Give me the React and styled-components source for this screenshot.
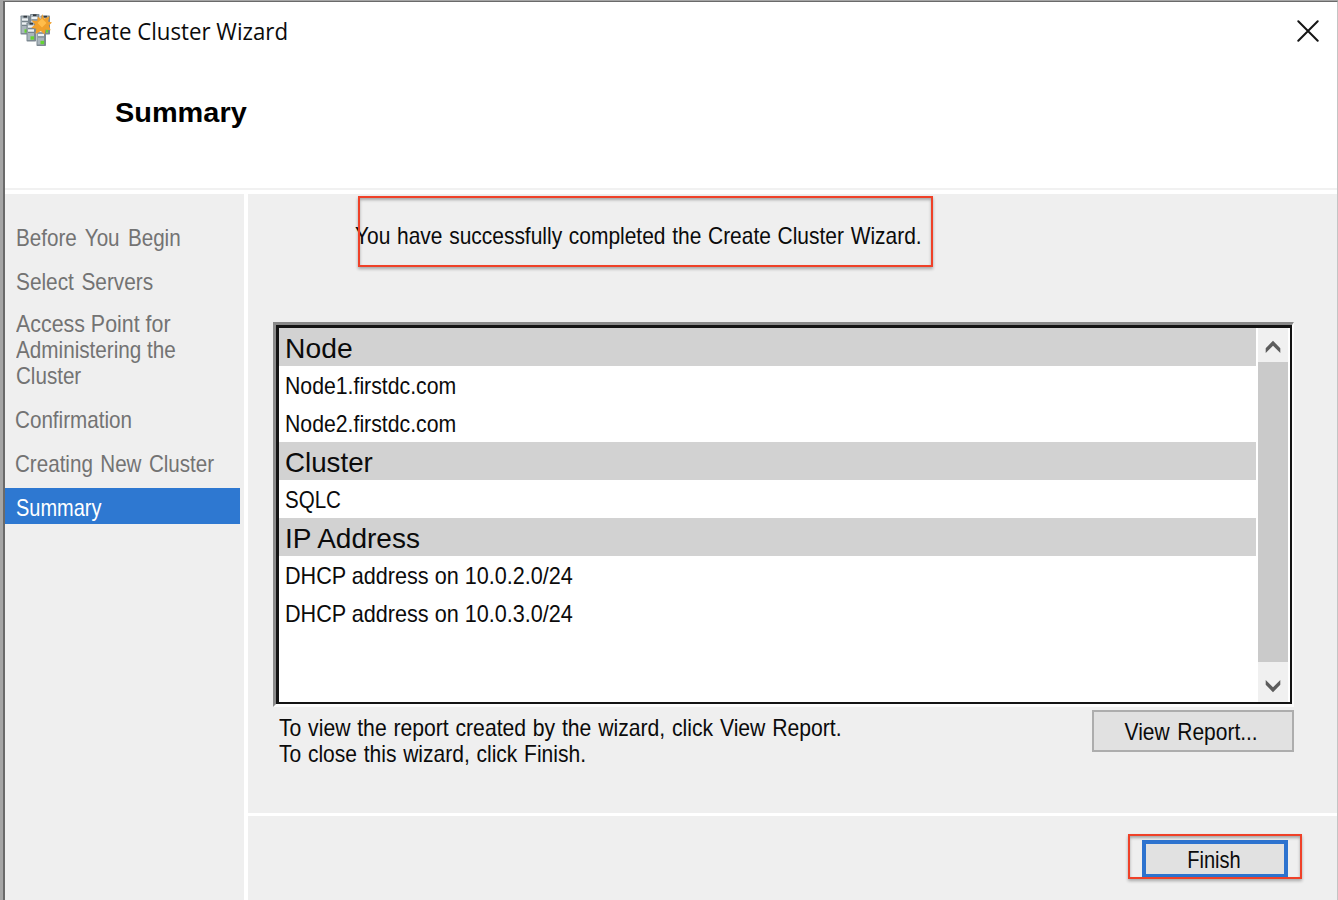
import React from "react";
import styled, { createGlobalStyle } from "styled-components";

const GlobalStyle = createGlobalStyle`
  * { box-sizing: border-box; }
  body { margin: 0; background: #a9a9a9; overflow: hidden; }
`;

const Desktop = styled.div`
  width: 1338px;
  height: 900px;
  padding: 1px 0 0 3px;
  background: #a5a5a5;
  font-family: "Liberation Sans", Arial, sans-serif;
  font-size: 24px;
  line-height: 26px;
  color: #0b0b0b;
`;

const Window = styled.div`
  display: flex;
  flex-direction: column;
  height: 899px;
  border: solid #6a6a6a;
  border-width: 1px 0 0 2px;
  border-right: 1px solid #c4c4c4;
  background: #fff;
`;

const TitleBar = styled.header`
  display: flex;
  align-items: center;
  height: 60px;
  padding: 0 18px 3px 14px;
`;

const Title = styled.div`
  flex: 1;
  padding: 1px 0 0 11px;
  font-family: "Open Sans", sans-serif;
  line-height: 34px;
`;

const Fit = styled.span`
  display: inline-block;
  white-space: nowrap;
  word-spacing: ${(p) => p.$gap || 0}px;
  transform: scaleX(${(p) => p.$x || 0.885});
  transform-origin: ${(p) => p.$from || "left"} center;
`;

const Heading = styled.h1`
  margin: 0;
  height: 126px;
  padding: 34px 0 0 110px;
  font-size: 28px;
  line-height: 34px;
  font-weight: 700;
  color: #000;
`;

const Rule = styled.div`
  height: 2px;
  margin-bottom: 4px;
  background: #f1f1f1;
`;

const Body = styled.div`
  flex: 1;
  display: flex;
  gap: 4px;
`;

const Sidebar = styled.nav`
  display: flex;
  flex-direction: column;
  gap: 8px;
  width: 239px;
  padding: 24px 4px 0 0;
  background: #efefef;
`;

const Step = styled.div`
  padding: 7px 0 3px ${(p) => p.$inset || 11}px;
  margin-top: ${(p) => p.$lift || 0}px;
  color: ${(p) => (p.$active ? "#fff" : "#737373")};
  background: ${(p) => (p.$active ? "#2e78d1" : "transparent")};
`;

const Main = styled.main`
  flex: 1;
  display: flex;
  flex-direction: column;
`;

const Page = styled.section`
  height: 619px;
  padding: 29px 43px 0 25px;
  background: #efefef;
`;

const Message = styled.div`
  position: relative;
  height: 99px;
  padding-left: 82px;
`;

const Highlight = styled.div`
  position: absolute;
  left: ${(p) => p.$left}px;
  top: ${(p) => p.$top}px;
  width: ${(p) => p.$w}px;
  height: ${(p) => p.$h}px;
  border: 2px solid #ef4128;
  box-shadow: 0 2px 3px rgba(0, 0, 0, 0.3), inset 0 2px 3px rgba(0, 0, 0, 0.3);
  pointer-events: none;
`;

const ReportFrame = styled.div`
  width: 1021px;
  height: 385px;
  border: solid;
  border-width: 3px 2px 3px 3px;
  border-color: #888 #fbfbfb #fbfbfb #8a8a8a;
`;

const Report = styled.div`
  display: flex;
  height: 379px;
  border: solid #131313;
  border-width: 3px 2px 2px 3px;
  background: #fff;
`;

const Rows = styled.div`
  flex: 1;
  margin-right: 2px;
`;

const GroupRow = styled.div`
  height: 38px;
  padding: 4px 0 0 6px;
  font-size: 28px;
  line-height: 34px;
  background: #d2d2d2;
`;

const ItemRow = styled.div`
  height: 38px;
  padding: 7px 0 0 6px;
`;

const ScrollBar = styled.div`
  display: flex;
  flex-direction: column;
  width: 30px;
  margin-right: 2px;
  background: #f0f0f0;
`;

const Arrow = styled.div`
  display: flex;
  align-items: center;
  justify-content: center;
  height: ${(p) => p.$h}px;
  padding-top: ${(p) => p.$drop}px;
`;

const Thumb = styled.div`
  height: 300px;
  background: #cacaca;
`;

const ReportFooter = styled.div`
  display: flex;
  justify-content: space-between;
  padding: 3px 0 0 6px;
`;

const Hint = styled.div`
  padding-top: 5px;
`;

const Button = styled.button`
  display: flex;
  align-items: center;
  justify-content: center;
  width: ${(p) => p.$w}px;
  height: ${(p) => p.$h}px;
  padding: 2px ${(p) => (p.$primary ? 1 : 4)}px 0 0;
  border: ${(p) => (p.$primary ? "4px solid #2d73cf" : "2px solid #adadad")};
  background: #e1e1e1;
  font: inherit;
  color: inherit;
`;

const Actions = styled.footer`
  position: relative;
  flex: 1;
  display: flex;
  justify-content: flex-end;
  align-items: flex-start;
  margin-top: 3px;
  padding: 24px 49px 0 0;
  background: #efefef;
`;

const Server = ({ x, y }) => (
  <g transform={`translate(${x} ${y})`}>
    <rect width="9.5" height="19" rx="0.8" fill="#7d8992" />
    <rect x="1" y="1" width="6.5" height="16.5" fill="#aab5bc" />
    <path d="M1.5 4h6M1.5 8h6" stroke="#eef2f3" strokeWidth="2" />
    <path d="M1.5 6h6M1.5 10h6" stroke="#77838b" strokeWidth="1.2" />
    <path d="M3 1.2h3.5" stroke="#343b40" strokeWidth="1.8" />
    <rect x="4" y="13.8" width="3.6" height="3.4" fill="#65d532" />
  </g>
);

const ClusterIcon = () => (
  <svg width="33" height="34" viewBox="0 0 33 34">
    <Server x={1.5} y={1.5} />
    <Server x={21.5} y={1.5} />
    <Server x={11} y={0} />
    <Server x={7.5} y={8.5} />
    <Server x={17.5} y={13} />
    <path
      d="M23.2 0l2 4.8 5.4-2.6-1.6 5.4 4 .8-3.3 3 2 4.9-5-.7-1.2 4.9-3.6-3.4-5.4 3 .8-5.4-5.1-1 4-3.2-3.8-3.9 5.8.4.7-4.6 3.2 2.8z"
      fill="#f0a02c"
    />
    <path d="M23 4.5l4.5 4.5-4.5 4.5-4.5-4.5z" fill="#ffbd4b" />
  </svg>
);

const CloseIcon = () => (
  <svg width="22" height="22" viewBox="0 0 22 22">
    <path d="M1.3 1.3l19.4 19.4M20.7 1.3L1.3 20.7" stroke="#151515" strokeWidth="2" strokeLinecap="round" />
  </svg>
);

const Chevron = ({ down }) => (
  <svg width="16" height="14" viewBox="0 0 16 14">
    <path
      d={down ? "M.7 1v4.8L8 13.2l7.3-7.4V1L8 8.2z" : "M.7 13V8.2L8 .8l7.3 7.4V13L8 5.8z"}
      fill="#5c5c5c"
    />
  </svg>
);

const report = [
  { title: "Node", x: 1.01, items: [["Node1.firstdc.com", 0.885], ["Node2.firstdc.com", 0.885]] },
  { title: "Cluster", x: 0.99, items: [["SQLC", 0.855]] },
  { title: "IP Address", x: 1.0, items: [["DHCP address on 10.0.2.0/24", 0.9], ["DHCP address on 10.0.3.0/24", 0.9]] },
];

export default function App() {
  return (
    <Desktop>
      <GlobalStyle />
      <Window>
        <TitleBar>
          <ClusterIcon />
          <Title><Fit $x={0.927}>Create Cluster Wizard</Fit></Title>
          <CloseIcon />
        </TitleBar>
        <Heading><Fit $x={1.032}>Summary</Fit></Heading>
        <Rule />
        <Body>
          <Sidebar>
            <Step><Fit $gap={3} $x={0.86}>Before You Begin</Fit></Step>
            <Step><Fit $gap={2} $x={0.868}>Select Servers</Fit></Step>
            <Step $lift={-2}>
              <Fit $x={0.891}>Access Point for</Fit><br />
              <Fit $x={0.862}>Administering the</Fit><br />
              <Fit $x={0.858}>Cluster</Fit>
            </Step>
            <Step $inset={10}><Fit $x={0.86}>Confirmation</Fit></Step>
            <Step $inset={10}><Fit $gap={2} $x={0.858}>Creating New Cluster</Fit></Step>
            <Step $active $inset={11}><Fit $x={0.832}>Summary</Fit></Step>
          </Sidebar>
          <Main>
            <Page>
              <Message>
                <Fit $gap={1} $x={0.873}>You have successfully completed the Create Cluster Wizard.</Fit>
                <Highlight $left={85} $top={-27} $w={575} $h={71} />
              </Message>
              <ReportFrame>
                <Report>
                  <Rows>
                    {report.map((group) => (
                      <React.Fragment key={group.title}>
                        <GroupRow><Fit $x={group.x}>{group.title}</Fit></GroupRow>
                        {group.items.map(([text, x]) => (
                          <ItemRow key={text}><Fit $x={x}>{text}</Fit></ItemRow>
                        ))}
                      </React.Fragment>
                    ))}
                  </Rows>
                  <ScrollBar>
                    <Arrow $h={34} $drop={3}><Chevron /></Arrow>
                    <Thumb />
                    <Arrow $h={40} $drop={7}><Chevron down /></Arrow>
                  </ScrollBar>
                </Report>
              </ReportFrame>
              <ReportFooter>
                <Hint>
                  <Fit $gap={1} $x={0.882}>To view the report created by the wizard, click View Report.</Fit><br />
                  <Fit $gap={1} $x={0.876}>To close this wizard, click Finish.</Fit>
                </Hint>
                <Button $w={202} $h={42}><Fit $gap={2} $x={0.874} $from="center">View Report...</Fit></Button>
              </ReportFooter>
            </Page>
            <Actions>
              <Button $primary $w={146} $h={38}><Fit $x={0.835} $from="center">Finish</Fit></Button>
              <Highlight $left={880} $top={18} $w={174} $h={45} />
            </Actions>
          </Main>
        </Body>
      </Window>
    </Desktop>
  );
}
